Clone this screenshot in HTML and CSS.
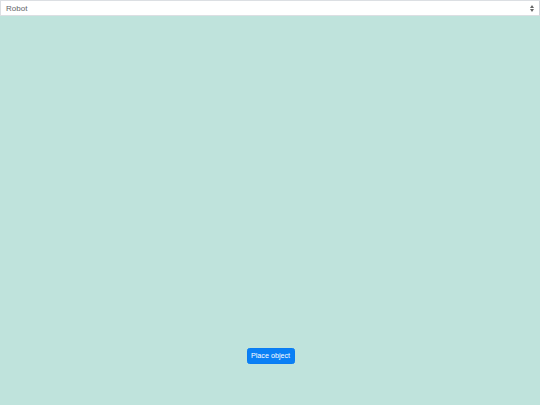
FILE: index.html
```html
<!DOCTYPE html>
<html>
<head>
<meta charset="utf-8">
<link rel="stylesheet" href="styles.css">
</head>
<body>
<div class="page">
  <div class="select">
    <span class="select-value">Robot</span>
    <svg class="select-arrow" width="4" height="7" viewBox="0 0 4 7"><path d="M2 0 L4 3 L0 3 Z M0 4 L4 4 L2 7 Z" fill="#666"/></svg>
  </div>
  <div class="scene">
    <button class="place-btn">Place object</button>
  </div>
</div>
</body>
</html>
```
FILE: styles.css
```css
html, body {
  margin: 0;
  padding: 0;
  height: 100%;
}
body {
  background: #bfe3dc;
  font-family: "Liberation Sans", Arial, sans-serif;
}
.page {
  display: flex;
  flex-direction: column;
  height: 405px;
}
.select {
  box-sizing: border-box;
  height: 16px;
  background: #ffffff;
  border: 1px solid #dcdfe3;
  border-right-color: #d0d3d8;
  display: flex;
  align-items: center;
  justify-content: space-between;
  padding: 1px 5px 0 5px;
}
.select-value {
  font-size: 8px;
  color: #5f6469;
  line-height: 1;
}
.select-arrow {
  display: block;
}
.scene {
  flex: 1;
  display: flex;
  flex-direction: column;
  align-items: center;
  justify-content: flex-end;
  padding-bottom: 41px;
}
.place-btn {
  box-sizing: border-box;
  width: 48px;
  height: 16px;
  margin-left: 1px;
  padding: 0;
  border: 1px solid #0a7cf2;
  border-radius: 2.5px;
  background: #0a80f5;
  color: #ffffff;
  font-family: "Liberation Sans", Arial, sans-serif;
  font-size: 7.2px;
  line-height: 1;
}
```
